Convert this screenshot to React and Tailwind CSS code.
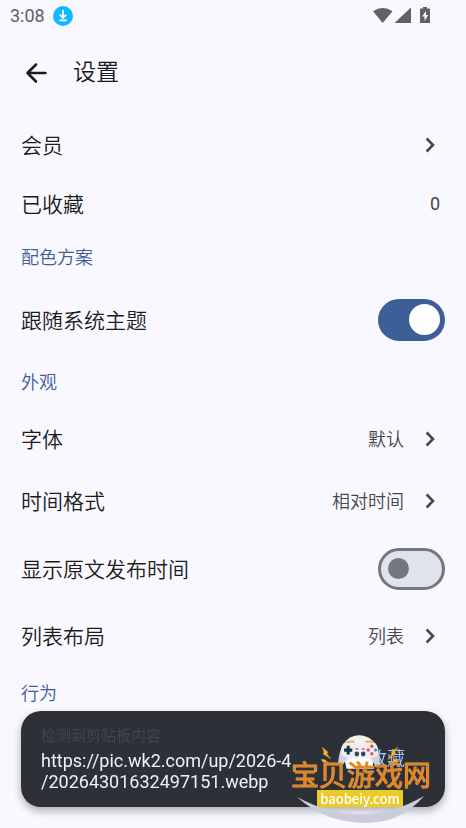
import { useState } from "react";

function Chevron() {
  return (
    <svg className="size-5 shrink-0" viewBox="0 0 20 20" fill="none" stroke="#44474e" strokeWidth="2.6" aria-hidden="true">
      <path d="M6.6 3.5 13 10l-6.4 6.5" />
    </svg>
  );
}

function StatusBar() {
  return (
    <div className="flex h-8 items-center justify-between pl-[10px] pr-9 text-[#606166]">
      <div className="flex items-center gap-2">
        <span className="text-lg leading-8">3:08</span>
        <svg className="size-5" viewBox="0 0 20 20" aria-hidden="true">
          <circle cx="10" cy="10" r="10" fill="#10b9fb" />
          <path d="M10 4v7.4M6.7 8.6 10 11.8l3.3-3.2M6.4 14.4h7.2" fill="none" stroke="#fff" strokeWidth="1.7" />
        </svg>
      </div>
      <svg className="h-[18px] w-[58px]" viewBox="0 0 58 18" fill="#606166" aria-hidden="true">
        <path d="M1 4.2Q10.500-2.200 20.500 4.200L10.700 16Z" />
        <path d="M39 .5V16H22.500Z" />
        <path d="M51 0h4v1.500h3V16H48V1.500h3Z" />
        <path d="m54 4-4 5.500h2.500v4.500l3.700-6h-2.200Z" fill="#f9f8ff" />
      </svg>
    </div>
  );
}

function Section({ children }) {
  return <h2 className="flex h-[52px] items-center px-[21px] pb-0.5 text-lg leading-6 text-[#415f97]">{children}</h2>;
}

function LinkRow({ label, value }) {
  return (
    <button type="button" className="flex h-[62px] w-full items-center justify-between pl-[21px] pr-[26px] text-left">
      <span className="pb-0.5 text-[21px] leading-7">{label}</span>
      <span className="flex items-center gap-4 text-lg leading-6 text-[#44474e]">
        {value && <span className="pb-0.5">{value}</span>}
        <Chevron />
      </span>
    </button>
  );
}

function SwitchRow({ label, initial }) {
  const [on, setOn] = useState(initial);
  return (
    <label className="flex h-[73px] items-center justify-between px-[21px]">
      <span className="pb-0.5 text-[21px] leading-7">{label}</span>
      <input
        type="checkbox"
        role="switch"
        checked={on}
        onChange={() => setOn(!on)}
        className="flex h-[42px] w-[67px] shrink-0 appearance-none items-center rounded-full border-[3px] border-[#74777f] bg-[#e0e2ec] px-[7px] before:size-[21px] before:rounded-full before:bg-[#74777f] before:content-[''] checked:justify-end checked:border-[#3d5f98] checked:bg-[#3d5f98] checked:px-[2px] checked:before:size-[31px] checked:before:bg-white"
      />
    </label>
  );
}

function Watermark() {
  return (
    <div className="pointer-events-none fixed bottom-0 right-[30px] h-[100px] w-[146px]">
      <svg className="absolute inset-0 size-full" viewBox="0 0 146 100" aria-hidden="true">
        <path d="M7 69Q72 104 134 68Q111 95 76 95Q36 95 7 69Z" fill="#c9ccd9" />
        <g transform="translate(4.5 .5) scale(.91 .98)">
          <path d="M52 20C55 12 62 7 71 7s17 5 20 13l-6 20H57Z" fill="#f2f1f1" />
          <path d="M53 17c4-3 10-2 15 0h7c5-2 11-3 15 0 3 6 4 15 4 21-4 2-6-1-9-6-2-3-4-4-7-4H65c-4 0-7 2-9 5-3 5-5 6-8 4 0-7 2-15 5-20Z" fill="#cfd1dc" />
          <path d="M54 15c5-1 9 0 14 2h7c5-2 9-3 14-2 3 4 4 8 2 12-5 4-11 3-16 3h-7c-6 0-11 1-16-3-2-4-1-8 2-12Z" fill="#eeeef2" />
          <path d="M57 41c1-9 5-11 10-11h10c5 0 9 4 10 11Z" fill="#fff" />
          <path d="M57 14.500q4-2 9-1M78 13.500q5-1 9 1" stroke="#deb353" strokeWidth="2" fill="none" />
          <path d="M59 17.500v9M54.500 22h9" stroke="#17364b" strokeWidth="3.400" />
          <circle cx="85" cy="18.200" r="1.800" fill="#e64b5b" />
          <circle cx="85" cy="25.800" r="1.800" fill="#e64b5b" />
          <circle cx="81" cy="22" r="1.800" fill="#e64b5b" />
          <circle cx="89" cy="22" r="1.800" fill="#35a7bc" />
          <circle cx="68.500" cy="26" r="2.500" fill="#294c62" />
          <circle cx="75.500" cy="26" r="2.500" fill="#294c62" />
          <path d="M67 21h3m4 0h3" stroke="#d35767" strokeWidth="1.500" />
        </g>
        <path d="m32 19 6 5-1 2 4 5-8-5 1-2Zm-1 12 5 1v1l3 2-6-1-1-1Zm77-12-7 5 1 2-4 5 8-5-1-2Zm1 12-6 1v1l-3 2 6-1 1-1Z" fill="#f5b52d" stroke="#c98721" strokeWidth=".4" />
      </svg>
      <span className="absolute left-px top-[32px] whitespace-nowrap text-[28px] leading-[34px] font-normal text-[#e28524] [-webkit-text-stroke:1px_#e39a48] [paint-order:stroke]">
        宝贝游戏网
      </span>
      <span className="absolute left-[27px] top-[62px] flex h-[17px] w-[86px] items-center justify-center bg-[#eacb29] font-['Noto_Sans_CJK_SC',sans-serif] text-[13px] leading-4 font-medium text-white">
        baobeiy.com
      </span>
    </div>
  );
}

export default function App() {
  return (
    <div className="min-h-screen bg-[#f9f8ff] font-[Roboto,'Noto_Sans_CJK_SC',sans-serif] text-[#1a1b20]">
      <StatusBar />
      <header className="flex h-[82px] items-center gap-[26px] px-[25px] font-['Noto_Sans_CJK_SC',sans-serif] font-[350]">
        <button type="button" aria-label="返回">
          <svg className="size-[22px]" viewBox="0 0 22 22" fill="none" stroke="#1a1b20" strokeWidth="2.5" strokeLinecap="round" strokeLinejoin="round" aria-hidden="true">
            <path d="M20.500 11H2.500M11 2.500 2.500 11l8.500 8.500" />
          </svg>
        </button>
        <h1 className="pb-1.5 text-[23px] leading-7">设置</h1>
      </header>
      <main className="font-['Noto_Sans_CJK_SC',sans-serif] font-[350]">
        <LinkRow label="会员" />
        <div className="flex h-[55px] items-center justify-between pl-[21px] pr-[26px]">
          <span className="pb-0.5 text-[21px] leading-7">已收藏</span>
          <span className="font-[Roboto] text-lg font-normal text-[#44474e]">0</span>
        </div>
        <Section>配色方案</Section>
        <SwitchRow label="跟随系统主题" initial={true} />
        <Section>外观</Section>
        <LinkRow label="字体" value="默认" />
        <LinkRow label="时间格式" value="相对时间" />
        <SwitchRow label="显示原文发布时间" initial={false} />
        <LinkRow label="列表布局" value="列表" />
        <Section>行为</Section>
      </main>
      <div className="fixed inset-x-[21px] bottom-[21px] flex h-24 items-center justify-between rounded-[20px] bg-[#2e3038] pl-5 pr-10 shadow-[0_4px_8px_rgba(0,0,0,0.3)]">
        <div className="pb-1">
          <p className="text-[15px] leading-7 font-[350] text-[#44474e]">检测到剪贴板内容</p>
          <p className="whitespace-nowrap text-lg leading-[21px] text-[#f0f0f7]">
            https://pic.wk2.com/up/2026-4
            <br />
            /20264301632497151.webp
          </p>
        </div>
        <button type="button" className="text-lg font-[350] text-[#abc7ff]">收藏</button>
      </div>
      <Watermark />
    </div>
  );
}
